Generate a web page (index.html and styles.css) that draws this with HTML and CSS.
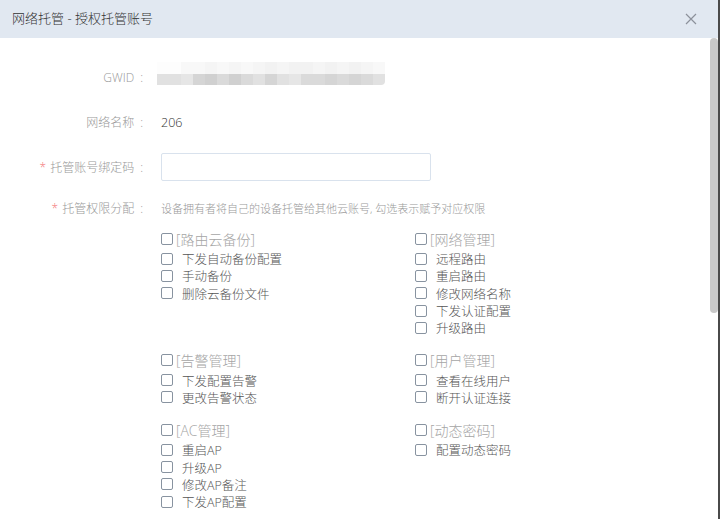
FILE: index.html
```html
<html>
<head>
    <title>网络托管 - 授权托管账号</title>
    <link rel="stylesheet" href="styles.css">
</head>
<body>
    <div class="modal">
        <div class="modal-header">
            <span class="modal-title">网络托管 - 授权托管账号</span>
            <button class="close-btn" title="关闭">
                <svg width="12" height="12" viewBox="0 0 12 12">
                    <path d="M1 1 L11 11 M11 1 L1 11" stroke="#8c919b" stroke-width="1.2" fill="none"/>
                </svg>
            </button>
        </div>

        <div class="modal-body">
            <div class="form-row">
                <label class="form-label">GWID</label>
                <div class="mosaic">
                    <div class="mosaic-line top">
                        <span class="w0"></span><span class="w0"></span><span class="w1"></span><span class="w1"></span><span class="w2"></span><span class="w1"></span><span class="w2"></span><span class="w1"></span><span class="w2"></span><span class="w3"></span><span class="w2"></span><span class="w3"></span><span class="w3"></span><span class="w2"></span><span class="w3"></span><span class="w2"></span><span class="w3"></span><span class="w2"></span><span class="w1"></span>
                    </div>
                    <div class="mosaic-line bottom">
                        <span class="g1"></span><span class="g1"></span><span class="g0"></span><span class="g3"></span><span class="g4"></span><span class="g2"></span><span class="g4"></span><span class="g2"></span><span class="g1"></span><span class="g3"></span><span class="g1"></span><span class="g0"></span><span class="g2"></span><span class="g2"></span><span class="g3"></span><span class="g2"></span><span class="g3"></span><span class="g2"></span><span class="g1"></span>
                    </div>
                </div>
            </div>

            <div class="form-row">
                <label class="form-label">网络名称</label>
                <div class="form-text">206</div>
            </div>

            <div class="form-row">
                <label class="form-label required">托管账号绑定码</label>
                <div><input class="form-input" type="text"></div>
            </div>

            <div class="form-row perm-row">
                <label class="form-label required">托管权限分配</label>
                <div>
                    <div class="hint">设备拥有者将自己的设备托管给其他云账号, 勾选表示赋予对应权限</div>

                    <div class="perm-grid">
                        <div class="perm-group">
                            <label class="perm-head"><span class="box"></span>[路由云备份]</label>
                            <label class="perm-item"><span class="box"></span>下发自动备份配置</label>
                            <label class="perm-item"><span class="box"></span>手动备份</label>
                            <label class="perm-item"><span class="box"></span>删除云备份文件</label>
                        </div>
                        <div class="perm-group">
                            <label class="perm-head"><span class="box"></span>[网络管理]</label>
                            <label class="perm-item"><span class="box"></span>远程路由</label>
                            <label class="perm-item"><span class="box"></span>重启路由</label>
                            <label class="perm-item"><span class="box"></span>修改网络名称</label>
                            <label class="perm-item"><span class="box"></span>下发认证配置</label>
                            <label class="perm-item"><span class="box"></span>升级路由</label>
                        </div>
                        <div class="perm-group">
                            <label class="perm-head"><span class="box"></span>[告警管理]</label>
                            <label class="perm-item"><span class="box"></span>下发配置告警</label>
                            <label class="perm-item"><span class="box"></span>更改告警状态</label>
                        </div>
                        <div class="perm-group">
                            <label class="perm-head"><span class="box"></span>[用户管理]</label>
                            <label class="perm-item"><span class="box"></span>查看在线用户</label>
                            <label class="perm-item"><span class="box"></span>断开认证连接</label>
                        </div>
                        <div class="perm-group">
                            <label class="perm-head"><span class="box"></span>[AC管理]</label>
                            <label class="perm-item"><span class="box"></span>重启AP</label>
                            <label class="perm-item"><span class="box"></span>升级AP</label>
                            <label class="perm-item"><span class="box"></span>修改AP备注</label>
                            <label class="perm-item"><span class="box"></span>下发AP配置</label>
                        </div>
                        <div class="perm-group">
                            <label class="perm-head"><span class="box"></span>[动态密码]</label>
                            <label class="perm-item"><span class="box"></span>配置动态密码</label>
                        </div>
                    </div>
                </div>
            </div>
        </div>

        <!-- fake scrollbar, headless hides the real one -->
        <div class="scroll-thumb"></div>
    </div>
</body>
</html>
```

FILE: styles.css
```css
body {
    margin: 0px;
    padding: 0px;
    background: #4a4a4a;
    font-family: "Open Sans", "Noto Sans CJK SC", sans-serif;
    font-weight: 300;
}

.modal {
    position: relative;
    width: 718px;
    height: 519px;
    background: #ffffff;
    overflow: hidden;
}

.modal-header {
    height: 38px;
    background: #e1e8f1;
    display: flex;
    align-items: center;
    justify-content: space-between;
    padding: 0px 21px 0px 12px;
    box-sizing: border-box;
}

.modal-title {
    font-size: 13px;
    color: #333333;
    margin-bottom: 3px;
}

.close-btn {
    background: transparent;
    border: none;
    padding: 0px;
    width: 12px;
    height: 12px;
    display: flex;
    cursor: pointer;
}

.modal-body {
    padding-top: 24px;
}

.form-row {
    display: grid;
    grid-template-columns: 147px 1fr;
    column-gap: 14px;
    align-items: center;
    height: 30px;
    margin-bottom: 15px;
}

.form-label {
    text-align: right;
    font-size: 12px;
    color: #999999;
    white-space: nowrap;
}

.form-label::after {
    content: ":";
    margin-left: 6px;
    margin-right: 4px;
}

.required::before {
    content: "*";
    color: #f47a7a;
    margin-right: 4px;
}

.form-text {
    font-size: 12.5px;
    color: #333333;
}

.form-input {
    display: block;
    width: 270px;
    height: 28px;
    border: 1px solid #d9e2ed;
    border-radius: 2px;
    box-sizing: border-box;
    outline: none;
}

/* blurred gwid */
.mosaic {
    width: 228px;
    height: 23px;
    margin-left: -4px;
    align-self: start;
    display: flex;
    flex-direction: column;
}

.mosaic-line {
    display: flex;
    flex: 1;
}

.mosaic-line span {
    flex: 1;
}

.mosaic-line.bottom {
    border-bottom-right-radius: 4px;
    overflow: hidden;
}

.w0 { background: #fdfdfd; }
.w1 { background: #f8f8f8; }
.w2 { background: #f5f5f5; }
.w3 { background: #f2f2f2; }
.g0 { background: #e6e6e6; }
.g1 { background: #e1e1e1; }
.g2 { background: #dadada; }
.g3 { background: #d5d5d5; }
.g4 { background: #d0d0d0; }

/* permissions */
.perm-row {
    height: auto;
    align-items: start;
}

.perm-row .form-label {
    line-height: 24px;
}

.hint {
    font-size: 11px;
    line-height: 24px;
    color: #999999;
    white-space: nowrap;
}

.perm-grid {
    display: grid;
    grid-template-columns: 254px 254px;
    row-gap: 13px;
    margin-top: 7px;
}

.perm-head {
    display: flex;
    align-items: center;
    height: 22px;
    font-size: 14px;
    color: #a5a5a5;
    white-space: nowrap;
}

.perm-item {
    display: flex;
    align-items: center;
    height: 17.3px;
    font-size: 12.5px;
    color: #555555;
    white-space: nowrap;
}

.box {
    flex: none;
    width: 12px;
    height: 12px;
    border: 1px solid #8893a0;
    border-radius: 2px;
    box-sizing: border-box;
    background: #ffffff;
}

.perm-head .box {
    margin-right: 3px;
}

.perm-item .box {
    margin-right: 9px;
}

.scroll-thumb {
    position: absolute;
    top: 38px;
    right: 0px;
    width: 8px;
    height: 275px;
    background: #c9c9c9;
    border-radius: 4px;
}
```
